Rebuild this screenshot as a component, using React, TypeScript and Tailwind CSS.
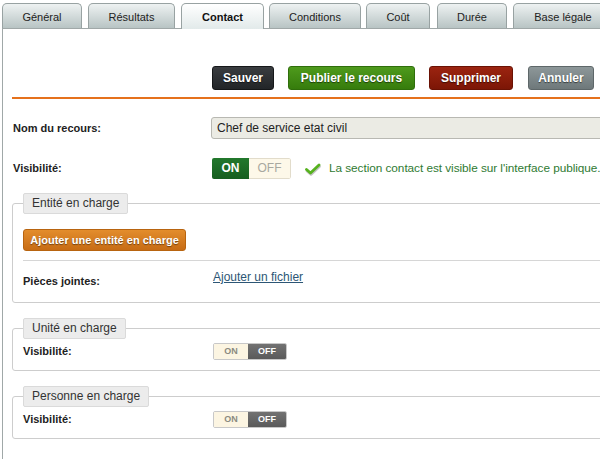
import React from "react";

const tabs = [
  { label: "Général", cls: "w-[80px]" },
  { label: "Résultats", cls: "w-[87px] ml-[6px]" },
  { label: "Contact", cls: "w-[83px] ml-[6px]", active: true },
  { label: "Conditions", cls: "w-[92px] ml-[5px]" },
  { label: "Coût", cls: "w-[64px] ml-[5px]" },
  { label: "Durée", cls: "w-[70px] ml-[7px]" },
  { label: "Base légale", cls: "w-[100px] ml-[6px]" },
];

function SmallToggle() {
  return (
    <div className="flex h-[17px] w-[74px] rounded-[2px] border border-[#c8c8c8] overflow-hidden text-[9px] font-bold leading-[15px]">
      <div className="w-[34px] bg-[#fcf5e2] text-[#8a8a80] text-center">ON</div>
      <div className="flex-1 bg-linear-to-b from-[#727272] to-[#5a5a5a] text-white text-center">OFF</div>
    </div>
  );
}

function Check() {
  return (
    <svg width="16" height="13" viewBox="0 0 16 13">
      <path d="M2 8 L6 11.5 L14.5 3.5" fill="none" stroke="#9a9a9a" strokeWidth="2.6" strokeLinecap="round" strokeLinejoin="round" opacity="0.6" />
      <path d="M1.5 6.5 L5.5 10 L14 2" fill="none" stroke="#56b21e" strokeWidth="2.8" strokeLinecap="round" strokeLinejoin="round" />
    </svg>
  );
}

function Legend({ children }: { children: React.ReactNode }) {
  return (
    <legend className="h-[21px] px-[8px] bg-[#ececec] border border-[#dadada] rounded-[2px] text-[12px] leading-[19px] text-[#333]">
      {children}
    </legend>
  );
}

export default function App() {
  return (
    <div className="w-[600px] h-[459px] overflow-hidden bg-white text-[#222] font-['Liberation_Sans',Arial,sans-serif]">
      <div className="relative z-10 flex items-end h-[28px] pl-[2px]">
        {tabs.map((t) =>
          t.active ? (
            <div
              key={t.label}
              className={`${t.cls} shrink-0 h-[26px] -mb-px rounded-t-[5px] border border-b-0 border-[#98a2a2] bg-linear-to-b from-[#ffffff] to-[#e2eaea] flex items-center justify-center text-[11px] font-bold text-[#111] pt-[2px]`}
            >
              {t.label}
            </div>
          ) : (
            <div
              key={t.label}
              className={`${t.cls} shrink-0 h-[25px] rounded-t-[5px] border border-b-0 border-[#98a2a2] bg-linear-to-b from-[#eef2f2] to-[#b8c4c4] flex items-center justify-center text-[11px] text-[#222] pt-[2px]`}
            >
              {t.label}
            </div>
          )
        )}
      </div>

      <div className="ml-[2px] w-[700px] h-[431px] border-l border-t border-[#a0a8a8] pl-[10px] pt-[37px]">
        <div className="flex ml-[199px] gap-[14px] text-[12px] font-bold text-white [text-shadow:0_1px_1px_rgba(0,0,0,0.55)]">
          <div className="w-[62px] h-[24px] rounded-[3px] border border-[#151719] bg-linear-to-b from-[#3a3d40] to-[#222528] flex items-center justify-center">
            Sauver
          </div>
          <div className="w-[127px] h-[24px] rounded-[3px] border border-[#2f6e0b] bg-linear-to-b from-[#4e9a1c] to-[#367c0c] flex items-center justify-center">
            Publier le recours
          </div>
          <div className="w-[84px] h-[24px] rounded-[3px] border border-[#6a1204] bg-linear-to-b from-[#9c2410] to-[#7c1606] flex items-center justify-center">
            Supprimer
          </div>
          <div className="ml-px w-[66px] h-[24px] rounded-[3px] border border-[#5e6769] bg-linear-to-b from-[#8d9799] to-[#6e787a] flex items-center justify-center">
            Annuler
          </div>
        </div>

        <div className="mt-[7px] -ml-px h-[2px] bg-[#e5711c]" />

        <div className="mt-[18px] flex items-center h-[22px]">
          <div className="w-[198px] text-[11px] font-bold text-[#222]">Nom du recours:</div>
          <div className="w-[420px] h-[22px] rounded-[3px] border border-[#b8b8b2] bg-[#ebebe4] px-[5px] text-[12px] leading-[20px] text-[#222]">
            Chef de service etat civil
          </div>
        </div>

        <div className="mt-[19px] flex items-center h-[21px]">
          <div className="w-[199px] text-[11px] font-bold text-[#222]">Visibilité:</div>
          <div className="flex h-[21px] w-[79px] rounded-[2px] overflow-hidden text-[12px] leading-[21px]">
            <div className="w-[37px] bg-linear-to-b from-[#22782c] to-[#165e1f] text-white font-bold text-center">ON</div>
            <div className="flex-1 bg-[#fdf8e9] border border-l-0 border-[#e2dccb] rounded-r-[2px] text-[#a8a8a0] text-center leading-[19px]">OFF</div>
          </div>
          <div className="ml-[14px] mt-[1px]">
            <Check />
          </div>
          <div className="ml-[8px] text-[11.8px] tracking-[-0.05px] text-[#2f7a32] whitespace-nowrap">
            La section contact est visible sur l'interface publique.
          </div>
        </div>

        <fieldset className="mt-[14px] -ml-px border border-[#cdcdcd] rounded-[3px] px-[10px]">
          <Legend>Entité en charge</Legend>
          <div className="mt-[15px] w-[163px] h-[22px] rounded-[3px] border border-[#b8640f] bg-linear-to-b from-[#e38d2c] to-[#c76c14] flex items-center justify-center text-[11px] font-bold text-white [text-shadow:0_1px_1px_rgba(0,0,0,0.45)]">
            Ajouter une entité en charge
          </div>
          <div className="mt-[9px] border-t border-[#d6d6d6]" />
          <div className="flex h-[41px]">
            <div className="w-[190px] mt-[13px] text-[11px] font-bold leading-[14px] text-[#222]">Pièces jointes:</div>
            <div className="mt-[9px] text-[12px] leading-[14px] text-[#2d5675] underline">Ajouter un fichier</div>
          </div>
        </fieldset>

        <fieldset className="mt-[15px] -ml-px border border-[#cdcdcd] rounded-[3px] px-[10px] pb-[10px]">
          <Legend>Unité en charge</Legend>
          <div className="mt-[4px] flex items-center h-[17px]">
            <div className="w-[190px] text-[11px] font-bold text-[#222]">Visibilité:</div>
            <SmallToggle />
          </div>
        </fieldset>

        <fieldset className="mt-[15px] -ml-px border border-[#cdcdcd] rounded-[3px] px-[10px] pb-[10px]">
          <Legend>Personne en charge</Legend>
          <div className="mt-[4px] flex items-center h-[17px]">
            <div className="w-[190px] text-[11px] font-bold text-[#222]">Visibilité:</div>
            <SmallToggle />
          </div>
        </fieldset>
      </div>
    </div>
  );
}
